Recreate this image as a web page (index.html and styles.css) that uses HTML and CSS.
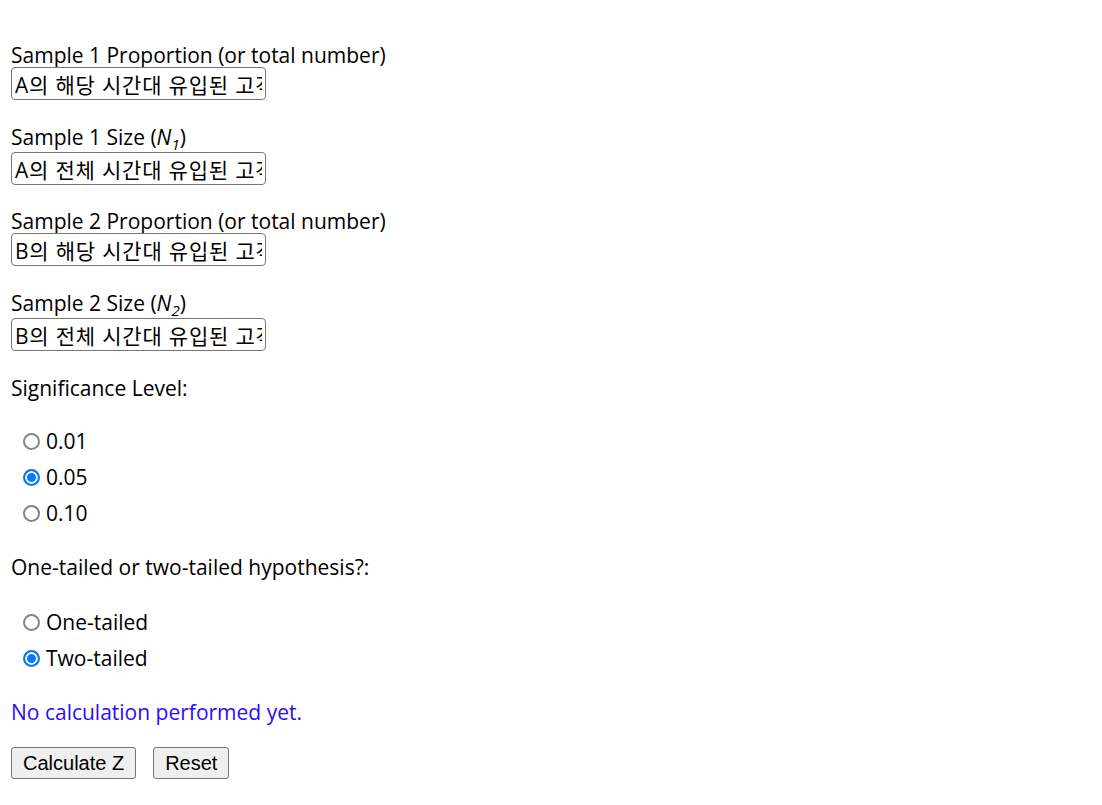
FILE: index.html
```html
<!DOCTYPE html>
<html lang="en">
<head>
<meta charset="utf-8">
<title>Two Proportion Z-Test</title>
<link rel="stylesheet" href="styles.css">
</head>
<body>
<form class="calc">
  <div class="field">
    <label class="lbl" for="p1">Sample 1 Proportion (or total number)</label>
    <input class="txt" id="p1" type="text" value="A의 해당 시간대 유입된 고객 수">
  </div>
  <div class="field">
    <label class="lbl lbl-sub" for="n1">Sample 1 Size (<i>N</i><sub>1</sub>)</label>
    <input class="txt" id="n1" type="text" value="A의 전체 시간대 유입된 고객 수">
  </div>
  <div class="field">
    <label class="lbl" for="p2">Sample 2 Proportion (or total number)</label>
    <input class="txt" id="p2" type="text" value="B의 해당 시간대 유입된 고객 수">
  </div>
  <div class="field">
    <label class="lbl lbl-sub" for="n2">Sample 2 Size (<i>N</i><sub>2</sub>)</label>
    <input class="txt" id="n2" type="text" value="B의 전체 시간대 유입된 고객 수">
  </div>

  <p class="heading heading-first">Significance Level:</p>
  <div class="radios">
    <label class="opt"><input class="rad" type="radio" name="sig" value="0.01">0.01</label>
    <label class="opt"><input class="rad" type="radio" name="sig" value="0.05" checked>0.05</label>
    <label class="opt"><input class="rad" type="radio" name="sig" value="0.10">0.10</label>
  </div>

  <p class="heading heading-second">One-tailed or two-tailed hypothesis?:</p>
  <div class="radios">
    <label class="opt"><input class="rad" type="radio" name="tail" value="1">One-tailed</label>
    <label class="opt"><input class="rad" type="radio" name="tail" value="2" checked>Two-tailed</label>
  </div>

  <p class="result">No calculation performed yet.</p>

  <div class="buttons">
    <button class="btn" type="button">Calculate Z</button>
    <button class="btn" type="reset">Reset</button>
  </div>
</form>
</body>
</html>
```

FILE: styles.css
```css
html, body {
  margin: 0;
  padding: 0;
  background: #ffffff;
}

body {
  font-family: "Open Sans", "Noto Sans CJK KR", sans-serif;
  font-size: 21px;
  color: #000000;
  padding: 42px 10px 10px 11px;
}

.calc {
  display: flex;
  flex-direction: column;
}

.field {
  display: flex;
  flex-direction: column;
  align-items: flex-start;
  margin-bottom: 23px;
}

.lbl {
  line-height: 25px;
  height: 24px;
  padding-top: 1px;
  display: block;
  white-space: nowrap;
}

.lbl-sub {
  height: 28px;
  line-height: 27px;
}

.lbl sub {
  font-size: 15px;
  line-height: 0;
  font-style: italic;
}

.txt {
  width: 255px;
  height: 33px;
  box-sizing: border-box;
  font-family: "Open Sans", "Noto Sans CJK KR", sans-serif;
  font-size: 21px;
  letter-spacing: 0.8px;
  color: #000000;
  border: 1px solid #767676;
  border-radius: 4px;
  padding: 0 3px;
  margin: 0;
}

.heading {
  margin: 0 0 22px 0;
  line-height: 26px;
}

.heading-first {
  margin-top: 1px;
}

.heading-second {
  margin-bottom: 24px;
}

.radios {
  display: flex;
  flex-direction: column;
  padding-left: 12px;
  margin-bottom: 23px;
}

.opt {
  display: flex;
  align-items: center;
  height: 36px;
}

.rad {
  appearance: none;
  -webkit-appearance: none;
  box-sizing: border-box;
  width: 17px;
  height: 17px;
  margin: 0 6px 0 0;
  border: 2px solid #858585;
  border-radius: 50%;
  background: #ffffff;
  flex: none;
}

.rad:checked {
  border-color: #0a75ff;
  background: #0a75ff;
  box-shadow: inset 0 0 0 2px #ffffff;
}

.result {
  color: #2a0cff;
  margin: 0 0 22px 0;
  line-height: 26px;
}

.buttons {
  display: flex;
  gap: 17px;
}

.btn {
  font-family: "Liberation Sans", Arial, sans-serif;
  font-size: 20px;
  height: 32px;
  padding: 0 11px;
  border: 1px solid #767676;
  border-radius: 3px;
  background: #efefef;
  color: #000000;
}
```
